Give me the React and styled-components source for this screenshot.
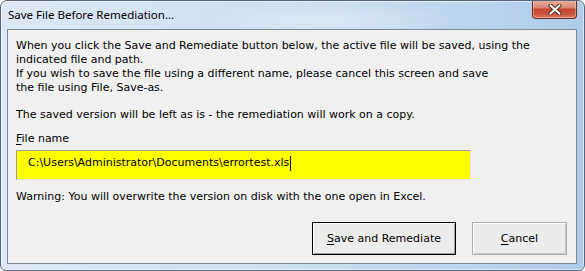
import React from "react";
import styled, { createGlobalStyle } from "styled-components";

const Global = createGlobalStyle`
  html, body { margin: 0; padding: 0; background: #ffffff; }
  #root { width: 585px; height: 271px; }
`;

const Window = styled.div`
  box-sizing: border-box;
  width: 585px;
  height: 271px;
  display: flex;
  flex-direction: column;
  border: 1px solid #56657a;
  border-radius: 7px 7px 6px 6px;
  background:
    radial-gradient(ellipse 180px 30px at 330px 20px, rgba(255,255,255,0.35), rgba(255,255,255,0) 70%),
    linear-gradient(to right, #dce8f5 0%, #cfe0f2 45%, #bcd5ee 80%, #aecbea 100%);
  box-shadow: inset 0 0 0 1px rgba(255,255,255,0.55);
  overflow: hidden;
`;

const TitleBar = styled.div`
  height: 28px;
  display: flex;
  align-items: flex-start;
  justify-content: space-between;
  padding-left: 7px;
  padding-right: 7px;
`;

const Title = styled.div`
  font-family: "Noto Sans", "Open Sans", sans-serif;
  font-size: 11.5px;
  color: #000;
  margin-top: 6px;
`;

const CloseButton = styled.div`
  box-sizing: border-box;
  width: 45px;
  height: 19px;
  margin-top: -1px;
  border: 1px solid #6b2a1e;
  border-top: none;
  border-radius: 0 0 4px 4px;
  background: linear-gradient(
    to bottom,
    #eab0a2 0%,
    #dc8b77 40%,
    #c3472f 52%,
    #c9513a 75%,
    #dd7a5e 100%
  );
  box-shadow: inset 0 0 0 1px rgba(255,255,255,0.35);
  display: flex;
  align-items: center;
  justify-content: center;
`;

const Client = styled.div`
  flex: 1;
  margin: 0 7px 6px 6px;
  border: 1px solid #7f8a97;
  background: #f0f0f0;
  display: flex;
  flex-direction: column;
  padding: 9px 9px 0 8px;
  font-family: "DejaVu Sans", Tahoma, sans-serif;
  font-size: 11px;
  color: #000;
`;

const Para = styled.div`
  line-height: 14px;
  margin-top: ${(p) => p.$gap || 0}px;
  white-space: pre-line;
`;

const Input = styled.div`
  box-sizing: border-box;
  margin-top: 4px;
  width: 455px;
  height: 30px;
  background: #ffff00;
  border: 1px solid;
  border-color: #a0a0a0 #e3e3e3 #e3e3e3 #a0a0a0;
  padding: 5px 0 0 11px;
  line-height: 14px;
  display: flex;
  align-items: flex-start;
`;

const Caret = styled.span`
  display: inline-block;
  width: 1px;
  height: 15px;
  background: #000;
  margin-left: 1px;
`;

const ButtonRow = styled.div`
  margin-top: 18px;
  display: flex;
  justify-content: flex-end;
  gap: 16px;
`;

const Button = styled.div`
  box-sizing: border-box;
  width: ${(p) => p.$w}px;
  height: 33px;
  background: #ececec;
  border: 1px solid ${(p) => (p.$default ? "#000000" : "#adadad")};
  box-shadow: ${(p) =>
    p.$default
      ? "inset 1px 1px 0 #ffffff, inset -1px -1px 0 #a0a0a0"
      : "inset 1px 1px 0 #ffffff, inset -1px -1px 0 #c8c8c8"};
  display: flex;
  align-items: center;
  justify-content: center;
  font-size: 11px;
`;

const U = styled.span`
  text-decoration: underline;
  text-underline-offset: 2px;
`;

export default function App() {
  return (
    <>
      <Global />
      <Window>
        <TitleBar>
          <Title>Save File Before Remediation...</Title>
          <CloseButton>
            <svg width="14" height="11" viewBox="0 0 14 11">
              <path
                d="M2.5 1.5 L11.5 9.5 M11.5 1.5 L2.5 9.5"
                stroke="#4a2018"
                strokeWidth="4"
                strokeLinecap="round"
                fill="none"
              />
              <path
                d="M2.5 1.5 L11.5 9.5 M11.5 1.5 L2.5 9.5"
                stroke="#ffffff"
                strokeWidth="2.2"
                strokeLinecap="round"
                fill="none"
              />
            </svg>
          </CloseButton>
        </TitleBar>
        <Client>
          <Para>
            {"When you click the Save and Remediate button below, the active file will be saved, using the\nindicated file and path."}
          </Para>
          <Para>
            {"If you wish to save the file using a different name, please cancel this screen and save\nthe file using File, Save-as."}
          </Para>
          <Para $gap={13}>
            The saved version will be left as is - the remediation will work on a copy.
          </Para>
          <Para $gap={10}>
            <U>F</U>ile name
          </Para>
          <Input>
            C:\Users\Administrator\Documents\errortest.xls
            <Caret />
          </Input>
          <Para $gap={10}>
            Warning: You will overwrite the version on disk with the one open in Excel.
          </Para>
          <ButtonRow>
            <Button $w={144} $default>
              <span>
                <U>S</U>ave and Remediate
              </span>
            </Button>
            <Button $w={95}>
              <span>
                <U>C</U>ancel
              </span>
            </Button>
          </ButtonRow>
        </Client>
      </Window>
    </>
  );
}
